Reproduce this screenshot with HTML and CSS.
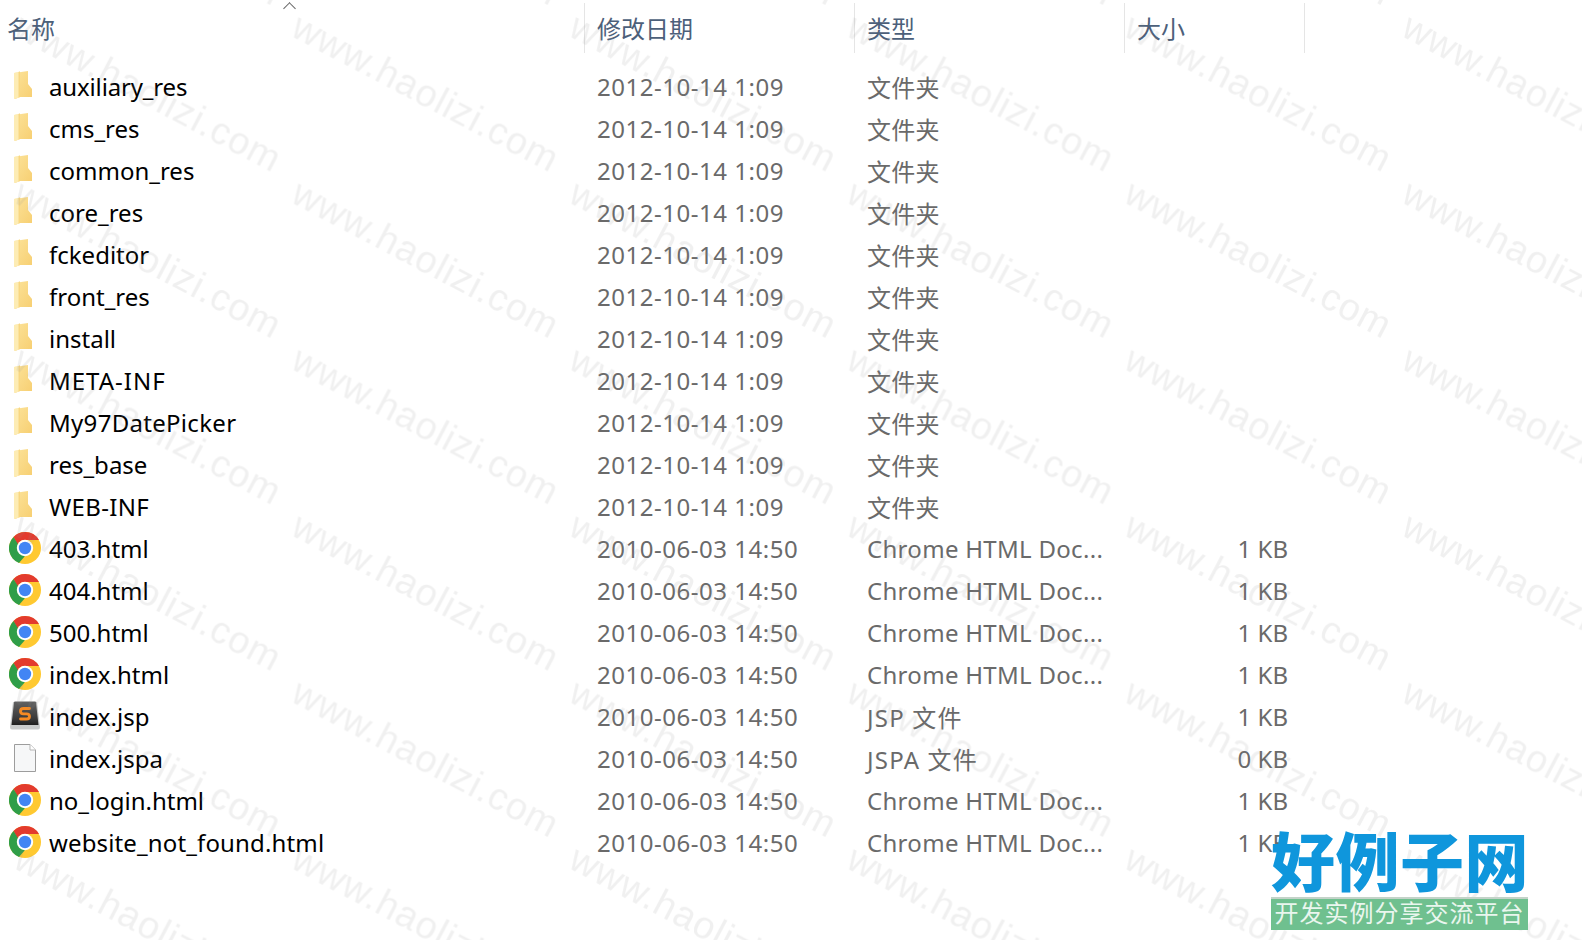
FILE: index.html
```html
<!DOCTYPE html>
<html lang="zh-CN">
<head>
<meta charset="utf-8">
<title>文件列表</title>
<link rel="stylesheet" href="styles.css">
</head>
<body>
<svg class="defs" width="0" height="0" aria-hidden="true">
  <defs>
    <linearGradient id="fold" x1="0" y1="0" x2="1" y2="1">
      <stop offset="0" stop-color="#fce39a"/>
      <stop offset="1" stop-color="#f7cf72"/>
    </linearGradient>
    <linearGradient id="subl" x1="0" y1="0" x2="0" y2="1">
      <stop offset="0" stop-color="#626262"/>
      <stop offset="0.75" stop-color="#383838"/>
      <stop offset="1" stop-color="#1f1f1f"/>
    </linearGradient>
    <symbol id="folder" viewBox="0 0 20 30">
      <path d="M1 3 L15 1 L15 14 L19 19 L19 27 L7 27 L2 29 L1 28 Z" fill="url(#fold)"/>
      <path d="M1 3 L7 1.5 L7 27 L2 29 L1 28 Z" fill="#fdecb4"/>
      <path d="M5.5 2 L7 1.5 L7 27 L5.5 27.5 Z" fill="#f9d781"/>
    </symbol>
    <symbol id="chrome" viewBox="0 0 32 32">
      <circle cx="16" cy="16" r="16" fill="#ffc931"/>
      <path d="M16 0 A16 16 0 0 1 30 8 L16 8 A8 8 0 0 0 8.5 13 L4.5 5 A16 16 0 0 1 16 0 Z" fill="#e33b2e"/>
      <path d="M4.5 5 L12 17 L16 24 L10 31 A16 16 0 0 1 4.5 5 Z" fill="#2f9e48"/>
      <circle cx="16" cy="16" r="8.2" fill="#fff"/>
      <circle cx="16" cy="16" r="6.2" fill="#4285f4"/>
    </symbol>
    <symbol id="sublime" viewBox="0 0 32 32">
      <path d="M4 2 H28 L31 27 Q31 29.5 29 29.5 H3 Q1 29.5 1 27 Z" fill="#c9cbcb"/>
      <path d="M5 2.5 Q5 1.5 6 1.5 H26 Q27 1.5 27 2.5 L29.5 25 H2.5 Z" fill="url(#subl)"/>
      <path d="M20.5 8.5 H14.5 Q11.5 8.5 11.5 11.2 Q11.5 13.8 14.5 13.8 H17.5 Q20.5 13.8 20.5 16.5 Q20.5 19 17.5 19 H11.5" fill="none" stroke="#f58a23" stroke-width="2.8" stroke-linecap="round"/>
    </symbol>
    <symbol id="doc" viewBox="0 0 24 30">
      <path d="M1.5 1.5 H17 L22.5 7 V28.5 H1.5 Z" fill="#f6f7f8" stroke="#9d9d9d"/>
      <path d="M17 1.5 V7 H22.5" fill="#fff" stroke="#b5b5b5"/>
    </symbol>
  </defs>
</svg>

<main class="explorer">
  <header class="head">
    <div class="h-cell h-name">名称<span class="chev"></span></div>
    <div class="h-cell">修改日期</div>
    <div class="h-cell">类型</div>
    <div class="h-cell">大小</div>
  </header>

  <ul class="list">
    <li class="row"><span class="name name-tight"><svg class="ico ico-folder"><use href="#folder"/></svg>auxiliary_res</span><span class="date">2012-10-14 1:09</span><span class="type">文件夹</span><span class="size"></span></li>
    <li class="row"><span class="name"><svg class="ico ico-folder"><use href="#folder"/></svg>cms_res</span><span class="date">2012-10-14 1:09</span><span class="type">文件夹</span><span class="size"></span></li>
    <li class="row"><span class="name"><svg class="ico ico-folder"><use href="#folder"/></svg>common_res</span><span class="date">2012-10-14 1:09</span><span class="type">文件夹</span><span class="size"></span></li>
    <li class="row"><span class="name"><svg class="ico ico-folder"><use href="#folder"/></svg>core_res</span><span class="date">2012-10-14 1:09</span><span class="type">文件夹</span><span class="size"></span></li>
    <li class="row"><span class="name"><svg class="ico ico-folder"><use href="#folder"/></svg>fckeditor</span><span class="date">2012-10-14 1:09</span><span class="type">文件夹</span><span class="size"></span></li>
    <li class="row"><span class="name"><svg class="ico ico-folder"><use href="#folder"/></svg>front_res</span><span class="date">2012-10-14 1:09</span><span class="type">文件夹</span><span class="size"></span></li>
    <li class="row"><span class="name"><svg class="ico ico-folder"><use href="#folder"/></svg>install</span><span class="date">2012-10-14 1:09</span><span class="type">文件夹</span><span class="size"></span></li>
    <li class="row"><span class="name name-caps"><svg class="ico ico-folder"><use href="#folder"/></svg>META-INF</span><span class="date">2012-10-14 1:09</span><span class="type">文件夹</span><span class="size"></span></li>
    <li class="row"><span class="name name-wide"><svg class="ico ico-folder"><use href="#folder"/></svg>My97DatePicker</span><span class="date">2012-10-14 1:09</span><span class="type">文件夹</span><span class="size"></span></li>
    <li class="row"><span class="name"><svg class="ico ico-folder"><use href="#folder"/></svg>res_base</span><span class="date">2012-10-14 1:09</span><span class="type">文件夹</span><span class="size"></span></li>
    <li class="row"><span class="name name-wide"><svg class="ico ico-folder"><use href="#folder"/></svg>WEB-INF</span><span class="date">2012-10-14 1:09</span><span class="type">文件夹</span><span class="size"></span></li>
    <li class="row"><span class="name"><svg class="ico ico-round"><use href="#chrome"/></svg>403.html</span><span class="date">2010-06-03 14:50</span><span class="type">Chrome HTML Doc...</span><span class="size">1 KB</span></li>
    <li class="row"><span class="name"><svg class="ico ico-round"><use href="#chrome"/></svg>404.html</span><span class="date">2010-06-03 14:50</span><span class="type">Chrome HTML Doc...</span><span class="size">1 KB</span></li>
    <li class="row"><span class="name"><svg class="ico ico-round"><use href="#chrome"/></svg>500.html</span><span class="date">2010-06-03 14:50</span><span class="type">Chrome HTML Doc...</span><span class="size">1 KB</span></li>
    <li class="row"><span class="name"><svg class="ico ico-round"><use href="#chrome"/></svg>index.html</span><span class="date">2010-06-03 14:50</span><span class="type">Chrome HTML Doc...</span><span class="size">1 KB</span></li>
    <li class="row"><span class="name"><svg class="ico ico-round"><use href="#sublime"/></svg>index.jsp</span><span class="date">2010-06-03 14:50</span><span class="type type-wide">JSP 文件</span><span class="size">1 KB</span></li>
    <li class="row"><span class="name"><svg class="ico ico-doc"><use href="#doc"/></svg>index.jspa</span><span class="date">2010-06-03 14:50</span><span class="type type-wide">JSPA 文件</span><span class="size">0 KB</span></li>
    <li class="row"><span class="name"><svg class="ico ico-round"><use href="#chrome"/></svg>no_login.html</span><span class="date">2010-06-03 14:50</span><span class="type">Chrome HTML Doc...</span><span class="size">1 KB</span></li>
    <li class="row"><span class="name name-long"><svg class="ico ico-round"><use href="#chrome"/></svg>website_not_found.html</span><span class="date">2010-06-03 14:50</span><span class="type">Chrome HTML Doc...</span><span class="size">1 KB</span></li>
  </ul>
</main>

<svg class="watermark" width="1582" height="940" aria-hidden="true">
  <defs>
    <pattern id="wm" width="277.6" height="166.4" patternUnits="userSpaceOnUse" x="5" y="13">
      <text class="wm-text" transform="translate(6.4 22) rotate(27.8)">www.haolizi.com</text>
    </pattern>
  </defs>
  <rect width="1582" height="940" fill="url(#wm)"/>
</svg>

<aside class="logo">
  <div class="logo-title">好例子网</div>
  <div class="logo-sub">开发实例分享交流平台</div>
</aside>
</body>
</html>
```
FILE: styles.css
```css
* { box-sizing: border-box; }
html, body { margin: 0; height: 100%; }
body {
  position: relative;
  width: 1582px;
  height: 940px;
  overflow: hidden;
  background: #fff;
  font-family: "Noto Sans", "Noto Sans CJK SC", sans-serif;
  font-size: 24px;
}
.defs { position: absolute; }

.explorer { padding-top: 3px; }

.head,
.row {
  display: grid;
  grid-template-columns: 584px 270px 270px 181px;
}
.head { height: 62px; color: #4c607a; }
.h-cell {
  height: 50px;
  padding: 0 0 1px 12px;
  display: flex;
  align-items: center;
  border-left: 1px solid #e5e5e5;
  position: relative;
}
.h-cell:last-child { border-right: 1px solid #e5e5e5; }
.h-name { border-left: 0; padding-left: 7px; }
.chev {
  position: absolute;
  left: 285px;
  top: 1px;
  width: 9px;
  height: 9px;
  border-left: 1px solid #666;
  border-top: 1px solid #666;
  transform: rotate(45deg);
}

.list { list-style: none; margin: 0; padding: 0; }
.row { height: 42px; align-items: center; color: #6a6a6a; }
.name {
  display: flex;
  align-items: center;
  color: #000;
  position: relative;
  padding-left: 49px;
}
.name-tight { letter-spacing: -0.15px; }
.name-long { letter-spacing: 0.14px; }
.name-wide { letter-spacing: 0.3px; }
.name-caps { letter-spacing: 1px; }
.date { padding-left: 13px; letter-spacing: 0.52px; }
.type { padding-left: 13px; white-space: nowrap; letter-spacing: 0.3px; }
.type-wide { letter-spacing: 1.2px; }
.size { text-align: right; padding-right: 17px; }

.ico { position: absolute; }
.ico-folder { left: 13px; top: 50%; width: 20px; height: 30px; margin-top: -16px; }
.ico-round { left: 9px; top: 50%; width: 32px; height: 32px; margin-top: -16px; }
.ico-doc { left: 13px; top: 50%; width: 24px; height: 30px; margin-top: -15px; }

.watermark { position: absolute; left: 0; top: 0; pointer-events: none; }
.wm-text {
  font-family: "Liberation Sans", sans-serif;
  font-size: 38px;
  letter-spacing: 1px;
  fill: #8a8a8a;
  fill-opacity: 0.13;
}

.logo {
  position: absolute;
  left: 1271px;
  top: 824px;
  width: 257px;
}
.logo-title {
  font-family: "Noto Sans CJK SC", sans-serif;
  font-weight: 900;
  font-size: 64px;
  letter-spacing: 0.5px;
  line-height: 69px;
  color: #0f96dc;
  text-align: center;
  white-space: nowrap;
}
.logo-sub {
  margin-top: 4px;
  height: 33px;
  border-top: 2px solid #c3d3c8;
  background: #6fc08f;
  color: #eaf6ee;
  font-family: "Noto Sans CJK SC", sans-serif;
  font-size: 24px;
  letter-spacing: 1px;
  line-height: 26px;
  text-align: center;
  white-space: nowrap;
}
```
